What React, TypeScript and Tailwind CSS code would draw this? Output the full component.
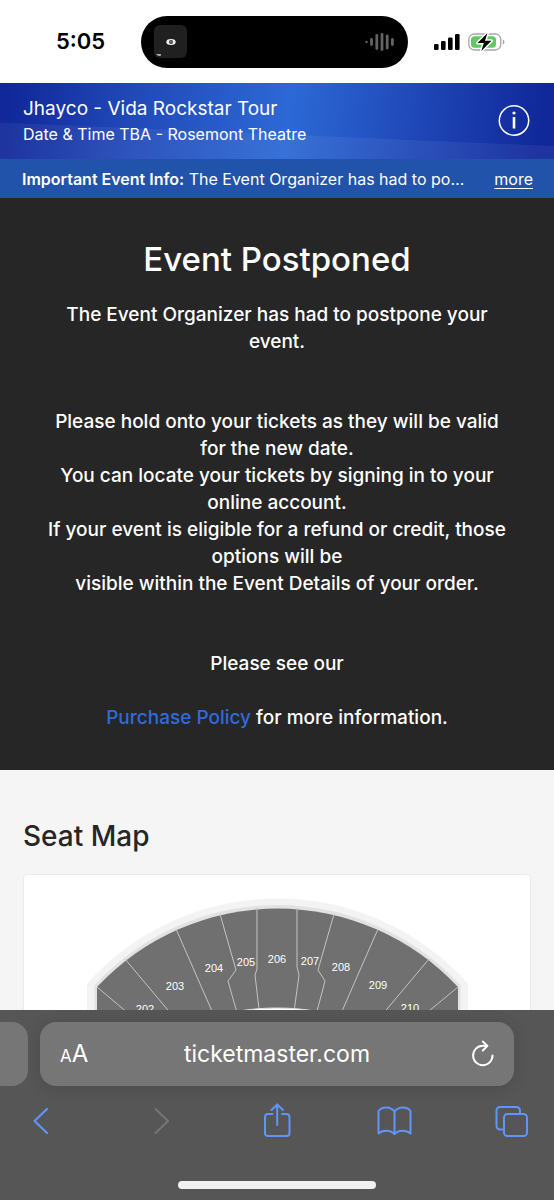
import React from 'react';

interface SeatLabel {
  name: string;
  x: number;
  y: number;
}

const seatLabels: SeatLabel[] = [
  { name: '202', x: 145, y: 1013 },
  { name: '203', x: 175, y: 990 },
  { name: '204', x: 214, y: 972 },
  { name: '205', x: 246, y: 966 },
  { name: '206', x: 277, y: 963 },
  { name: '207', x: 310, y: 965 },
  { name: '208', x: 341, y: 971 },
  { name: '209', x: 378, y: 989 },
  { name: '210', x: 410, y: 1012 },
];

const sectionLines = [
  'M97 987 L153 1034',
  'M125 959 L188 1034',
  'M176 929 L222 1034',
  'M220 914 L236 970 L228 981 L243 1034',
  'M257 908 V969 L255 975 L262 1034',
  'M297 908 V967 L299 975 L291 1034',
  'M334 914 L318 970 L325 981 L311 1034',
  'M378 929 L332 1034',
  'M429 959 L366 1034',
  'M458 987 L401 1034',
];

const StatusBar: React.FC = () => (
  <div className="grid h-[83px] shrink-0 grid-cols-[1fr_267px_1fr] items-center bg-white pr-[5px] text-black">
    <p className="pl-5 text-center text-[22px] font-semibold">5:05</p>
    <div className="flex h-13 items-center justify-between rounded-full bg-black px-3">
      <svg className="h-9 w-9" viewBox="0 0 36 36">
        <rect x="1" y="1" width="33" height="33" rx="6" fill="#202020" />
        <ellipse cx="18" cy="18" rx="4.7" ry="3" fill="#f2f2f2" />
        <circle cx="18" cy="18" r="2" fill="#333" />
        <circle cx="18" cy="18" r="0.8" fill="#bbb" />
        <path d="M3 30h5v1.500q-3 1.500-5-1.500z" fill="#aaa" />
      </svg>
      <svg className="h-5 w-8" viewBox="0 0 32 20" stroke="#636363" strokeWidth="2.800" strokeLinecap="round">
        <path d="M2.500 10v.1" strokeWidth="2.400" />
        <path d="M7.500 7.500v5M12.800 3.500v13M18 2.500v15M23.200 4v12M28.400 7.500v5" />
      </svg>
    </div>
    <div className="flex items-center gap-2 pl-[25px]">
      <svg className="h-[18px] w-[27px]" viewBox="0 0 27 18" fill="#000">
        <rect x="1" y="11" width="4.600" height="6" rx="1.300" />
        <rect x="8" y="8" width="4.600" height="9" rx="1.300" />
        <rect x="15" y="4.500" width="4.600" height="12.500" rx="1.300" />
        <rect x="22" y="1" width="4.600" height="16" rx="1.300" />
      </svg>
      <svg className="h-5 w-[38px]" viewBox="0 0 38 20">
        <rect x="0.800" y="2" width="32" height="16" rx="5.500" fill="none" stroke="#a6a6a6" strokeWidth="1.300" />
        <path d="M34.800 7.500v5q1.700-.8 1.700-2.500t-1.700-2.500z" fill="#a6a6a6" />
        <rect x="3" y="4.200" width="25" height="11.600" rx="3.500" fill="#62c866" />
        <path d="M19.500 1L9.500 11h6.300L13.300 19 23.500 8.800H17z" fill="#000" stroke="#fff" strokeWidth="3" strokeLinejoin="round" />
        <path d="M19.500 1L9.500 11h6.300L13.300 19 23.500 8.800H17z" fill="#000" />
      </svg>
    </div>
  </div>
);

const EventHeader: React.FC = () => (
  <header className="relative flex h-[76px] items-center justify-between bg-[linear-gradient(97deg,#10289a_2%,#2149b8_24%,#2c69d6_52%,#2048b8_74%,#10289a_97%)] pl-[23px] pr-6 text-white">
    <div className="absolute inset-0 bg-white/6 [clip-path:polygon(0_52%,100%_83%,100%_100%,0_100%)]" />
    <div className="relative">
      <h1 className="text-[19px] leading-[26px]">Jhayco - Vida Rockstar Tour</h1>
      <p className="text-[16px] leading-6">Date &amp; Time TBA - Rosemont Theatre</p>
    </div>
    <button type="button" aria-label="Event info" className="relative">
      <svg className="h-8 w-8" viewBox="0 0 32 32" fill="none" stroke="#fff">
        <circle cx="16" cy="15.500" r="14.700" strokeWidth="1.500" />
        <circle cx="16" cy="8" r="1.600" fill="#fff" stroke="none" />
        <path d="M16 12v11.500" strokeWidth="2.600" />
      </svg>
    </button>
  </header>
);

const InfoBar: React.FC = () => (
  <div className="flex h-[39px] items-center justify-between bg-[#2253aa] pl-[22px] pr-[21px] text-[16px] text-white">
    <p className="whitespace-nowrap">
      <b className="font-semibold">Important Event Info:</b> The Event Organizer has had to po…
    </p>
    <a href="#info" className="underline underline-offset-3">more</a>
  </div>
);

const PostponedNotice: React.FC = () => (
  <section className="bg-[#262626] px-10 pb-[39px] pt-10 text-center text-[19px] font-medium leading-[27px] text-white">
    <h2 className="mb-5 text-[33px] font-medium leading-[43px]">Event Postponed</h2>
    <p className="mb-[53px]">The Event Organizer has had to postpone your event.</p>
    <p className="mb-[53px]">
      Please hold onto your tickets as they will be valid for the new date.
      <br />
      You can locate your tickets by signing in to your online account.
      <br />
      If your event is eligible for a refund or credit, those options will be
      <br />
      visible within the Event Details of your order.
    </p>
    <p className="mb-[27px]">Please see our</p>
    <p>
      <a href="#policy" className="text-[#2f6bdc]">Purchase Policy</a> for more information.
    </p>
  </section>
);

const SeatMap: React.FC = () => (
  <section className="bg-[#f5f5f5] px-[23px] pb-8 pt-12">
    <h2 className="mb-5 text-[28px] font-medium leading-9 text-[#262626]">Seat Map</h2>
    <div className="overflow-hidden rounded-sm border border-[#ebebeb] bg-white">
      <svg className="block w-full" viewBox="24 875 506 240" role="img" aria-label="Seat map">
        <path d="M96 1115 V987 A247 247 0 0 1 459 987 V1115 Z" fill="#f3f3f3" stroke="#f3f3f3" strokeWidth="18" />
        <path d="M96 1115 V986 A247 247 0 0 1 459 986 V1115 Z" fill="#e2e2e2" stroke="#e2e2e2" strokeWidth="3" />
        <path d="M97 1115 V987 A247 247 0 0 1 458 987 V1115 Z" fill="#707070" />
        <g fill="none" stroke="#c4c4c4" strokeWidth="1">
          {sectionLines.map((d) => (
            <path key={d} d={d} />
          ))}
        </g>
        <ellipse cx="277" cy="1048" rx="100" ry="40" fill="#fff" stroke="#ddd" />
        <g fill="#fff" textAnchor="middle" fontSize="11" fontFamily="Liberation Sans, sans-serif">
          {seatLabels.map((label) => (
            <text key={label.name} x={label.x} y={label.y}>{label.name}</text>
          ))}
        </g>
      </svg>
    </div>
  </section>
);

const BrowserBar: React.FC = () => (
  <footer className="h-[190px] shrink-0 bg-[#565656] pt-3">
    <div className="flex h-16 gap-3 pr-10">
      <div className="w-7 rounded-r-2xl bg-[#767676]" />
      <div className="flex flex-1 items-center justify-between rounded-2xl bg-[#767676] px-5 text-white shadow-[0_2px_16px_rgba(0,0,0,0.12)]">
        <button type="button" aria-label="Text size" className="w-8 whitespace-nowrap text-left text-[24px]">
          <span className="text-[17px]">A</span>A
        </button>
        <span className="text-[23px]">ticketmaster.com</span>
        <button type="button" aria-label="Reload" className="flex w-8 justify-end">
          <svg className="h-7 w-6" viewBox="0 0 24 28" fill="none" stroke="#fff" strokeWidth="2" strokeLinecap="round" strokeLinejoin="round">
            <path d="M22.500 15.500a9.700 9.700 0 1 1-9.700-9.700h4.200" />
            <path d="M12.800 1.500l4.600 4.400-4.600 4.600" />
          </svg>
        </button>
      </div>
    </div>
    <nav className="mt-4 flex items-center justify-between pl-[23px] pr-[25px] text-[#5f94f8]">
      <button type="button" aria-label="Back">
        <svg className="h-9 w-9" viewBox="0 0 36 36" fill="none" stroke="currentColor" strokeWidth="2.200" strokeLinecap="round" strokeLinejoin="round">
          <path d="M24 7L11.500 19 24 31" />
        </svg>
      </button>
      <button type="button" aria-label="Forward" disabled className="text-[#747474]">
        <svg className="h-9 w-9" viewBox="0 0 36 36" fill="none" stroke="currentColor" strokeWidth="2.200" strokeLinecap="round" strokeLinejoin="round">
          <path d="M14.500 7L27 19 14.500 31" />
        </svg>
      </button>
      <button type="button" aria-label="Share">
        <svg className="h-9 w-9" viewBox="0 0 36 36" fill="none" stroke="currentColor" strokeWidth="2" strokeLinecap="round" strokeLinejoin="round">
          <path d="M14.500 12H10a3 3 0 0 0-3 3v16a3 3 0 0 0 3 3h18.500a3 3 0 0 0 3-3V15a3 3 0 0 0-3-3H24" />
          <path d="M19.200 23V2.500M13.500 8l5.700-5.500L25 8" />
        </svg>
      </button>
      <button type="button" aria-label="Bookmarks">
        <svg className="h-9 w-9" viewBox="0 0 36 36" fill="none" stroke="currentColor" strokeWidth="2" strokeLinecap="round" strokeLinejoin="round">
          <path d="M18.500 9.500C14.500 4.300 6 4.300 2.500 9v22.500c4-3.800 12-3.800 16 .5 4-4.300 12-4.300 16-.5V9c-3.500-4.700-12-4.700-16 .5z" />
          <path d="M18.500 9.500V32" />
        </svg>
      </button>
      <button type="button" aria-label="Tabs">
        <svg className="h-9 w-9" viewBox="0 0 36 36" fill="none" stroke="currentColor" strokeWidth="2" strokeLinejoin="round">
          <rect x="11" y="12" width="23" height="22" rx="3.500" />
          <path d="M11 27.500H7A3.500 3.500 0 0 1 3.500 24V8.500A3.500 3.500 0 0 1 7 5h16.500A3.500 3.500 0 0 1 27 8.500V12" />
        </svg>
      </button>
    </nav>
    <div className="mx-auto mt-[43px] h-2 w-[198px] rounded-full bg-[#f0f0f0]" />
  </footer>
);

const App: React.FC = () => {
  return (
    <div className="flex h-screen flex-col bg-white font-['Inter',sans-serif]">
      <StatusBar />
      <main className="min-h-0 flex-1 overflow-y-auto [scrollbar-width:none]">
        <EventHeader />
        <InfoBar />
        <PostponedNotice />
        <SeatMap />
      </main>
      <BrowserBar />
    </div>
  );
};

export default App;
